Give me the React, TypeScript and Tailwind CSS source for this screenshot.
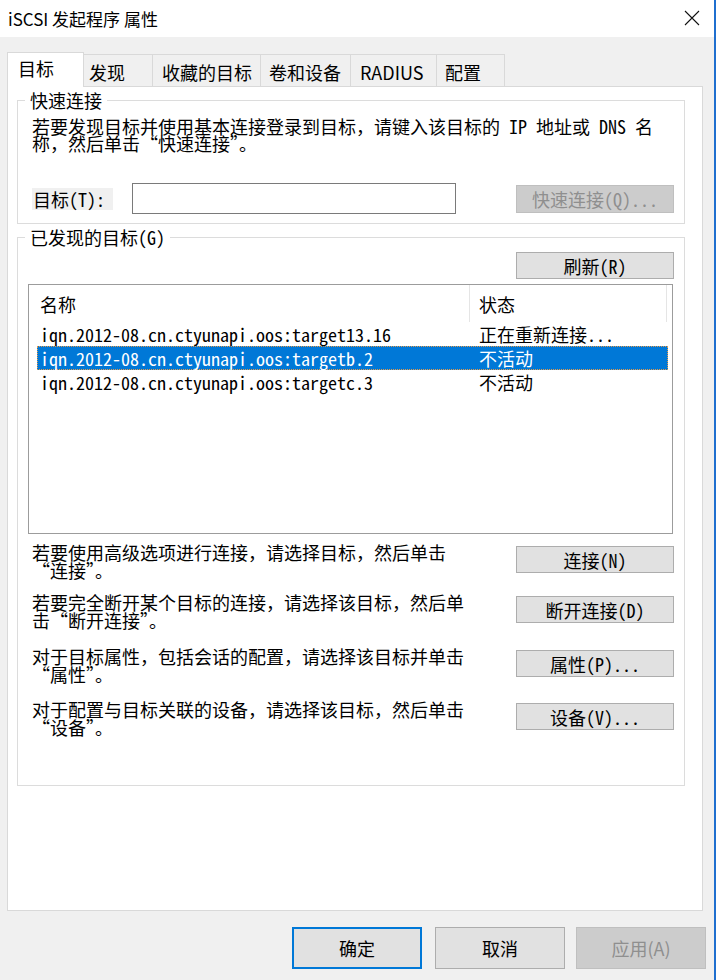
import { ReactNode } from "react";

const mono = "font-['Noto_Sans_Mono_CJK_SC','Liberation_Mono','Noto_Sans_CJK_SC',monospace]";
const ui = "font-['Noto_Sans_CJK_SC','Noto_Sans',sans-serif]";

export default function App() {
  return (
    <div className="flex h-[980px] w-[720px] bg-white text-black">
      <div className="flex w-[714px] flex-col bg-[#f0f0f0]">
        <TitleBar />
        <div className="pl-[7px] pt-[15px]">
          <TabStrip />
          <div className="h-[825px] w-[696px] border border-[#d9d9d9] bg-white pl-[9px] pt-[4px]">
            <QuickConnect />
            <Discovered />
          </div>
        </div>
        <Footer />
      </div>
      <div className="w-[2px] bg-[#1f6fcf]" />
    </div>
  );
}

function TitleBar() {
  return (
    <div className="flex h-[37px] items-center justify-between bg-white pl-[8px] pr-[14px]">
      <span className={`${ui} text-[17px] leading-[20px]`}>iSCSI 发起程序 属性</span>
      <svg width="16" height="16" viewBox="0 0 16 16" className="mb-[2px]">
        <path d="M1 1 L15 15 M15 1 L1 15" stroke="#111" strokeWidth="1.1" fill="none" />
      </svg>
    </div>
  );
}

const tabs = [
  { name: "发现", cls: "w-[69px] pl-[5px]" },
  { name: "收藏的目标", cls: "w-[108px] pl-[9px]" },
  { name: "卷和设备", cls: "w-[90px] pl-[8px]" },
  { name: "RADIUS", cls: "w-[86px] pl-[9px]" },
  { name: "配置", cls: "w-[68px] pl-[8px]" },
];

function TabStrip() {
  return (
    <div className={`${ui} flex h-[34px] items-end text-[18px] leading-[20px]`}>
      <div className="relative z-10 -mb-px h-[35px] w-[77px] border-l border-r border-t border-[#d9d9d9] bg-white pl-[10px] pt-[5px]">
        目标
      </div>
      {tabs.map((t) => (
        <div
          key={t.name}
          className={`h-[32px] border-r border-t border-[#d9d9d9] bg-[#f0f0f0] pt-[7px] ${t.cls}`}
        >
          {t.name}
        </div>
      ))}
    </div>
  );
}

function Btn({ children, disabled, className = "" }: { children: ReactNode; disabled?: boolean; className?: string }) {
  return (
    <div
      className={`${mono} flex w-[158px] items-center justify-center border text-[18px] leading-[20px] ${
        disabled ? "border-[#bfbfbf] bg-[#cccccc] text-[#8f8f8f]" : "border-[#adadad] bg-[#e1e1e1]"
      } ${className}`}
    >
      {children}
    </div>
  );
}

function QuickConnect() {
  return (
    <fieldset className={`${mono} w-[668px] border border-[#dcdcdc] pb-[9px] pl-[14px] pr-[10px] text-[18px]`}>
      <legend className="-ml-[7px] px-[5px] leading-[18px]">快速连接</legend>
      <p className="mt-[9px] whitespace-nowrap leading-[17px]">
        若要发现目标并使用基本连接登录到目标，请键入该目标的 IP 地址或 DNS 名
        <br />
        称，然后单击“快速连接”。
      </p>
      <div className="mt-[31px] flex h-[31px] items-center">
        <span className="flex h-[22px] w-[81px] items-center bg-[#f0f0f0] pl-px leading-[18px]">目标(T):</span>
        <div className="ml-[19px] h-[31px] w-[324px] border border-[#7a7a7a] bg-white" />
        <Btn disabled className="ml-auto h-[28px]">
          快速连接(Q)...
        </Btn>
      </div>
    </fieldset>
  );
}

const rows = [
  { name: "iqn.2012-08.cn.ctyunapi.oos:target13.16", status: "正在重新连接..." },
  { name: "iqn.2012-08.cn.ctyunapi.oos:targetb.2", status: "不活动", selected: true },
  { name: "iqn.2012-08.cn.ctyunapi.oos:targetc.3", status: "不活动" },
];

const actions = [
  { l1: "若要使用高级选项进行连接，请选择目标，然后单击", l2: "“连接”。", btn: "连接(N)", cls: "mt-[9px]" },
  { l1: "若要完全断开某个目标的连接，请选择该目标，然后单", l2: "击“断开连接”。", btn: "断开连接(D)", cls: "mt-[14px]" },
  { l1: "对于目标属性，包括会话的配置，请选择该目标并单击", l2: "“属性”。", btn: "属性(P)...", cls: "mt-[18px]" },
  { l1: "对于配置与目标关联的设备，请选择该目标，然后单击", l2: "“设备”。", btn: "设备(V)...", cls: "mt-[17px]" },
];

function Discovered() {
  return (
    <fieldset className={`${mono} mt-[4px] w-[668px] border border-[#dcdcdc] pb-[49px] pl-[10px] pr-[10px] text-[18px]`}>
      <legend className="-ml-[3px] px-[5px] leading-[18px]">已发现的目标(G)</legend>
      <div className="mt-[6px] flex justify-end">
        <Btn className="h-[27px]">刷新(R)</Btn>
      </div>
      <div className="mt-[5px] h-[250px] w-[645px] border border-[#9c9c9c] bg-white">
        <div className="flex h-[37px] items-center leading-[20px]">
          <div className="flex h-full w-[441px] items-center border-r border-[#e5e5e5] pl-[11px]">名称</div>
          <div className="flex h-full w-[197px] items-center border-r border-[#e5e5e5] pl-[9px]">状态</div>
        </div>
        {rows.map((r) => (
          <div
            key={r.name}
            className={`ml-[8px] flex h-[24px] w-[631px] items-center border leading-[20px] ${
              r.selected ? "border-dotted border-[#e59a4a] bg-[#0078d7] text-white" : "border-transparent"
            }`}
          >
            <span className="w-[439px] whitespace-nowrap pl-[2px]">{r.name}</span>
            <span className="whitespace-nowrap pl-[2px]">{r.status}</span>
          </div>
        ))}
      </div>
      {actions.map((a) => (
        <div key={a.btn} className={`flex items-start justify-between pl-[4px] ${a.cls}`}>
          <p className="whitespace-nowrap leading-[18px]">
            {a.l1}
            <br />
            {a.l2}
          </p>
          <Btn className="mt-[3px] h-[27px]">{a.btn}</Btn>
        </div>
      ))}
    </fieldset>
  );
}

function Footer() {
  return (
    <div className={`${ui} mt-[16px] flex justify-end pr-[8px] text-[18px] leading-[22px]`}>
      <div className="flex h-[42px] w-[130px] items-center justify-center border-2 border-[#0078d7] bg-[#e1e1e1]">确定</div>
      <div className="ml-[13px] flex h-[42px] w-[130px] items-center justify-center border border-[#adadad] bg-[#e1e1e1]">取消</div>
      <div className="ml-[11px] flex h-[42px] w-[130px] items-center justify-center border border-[#bfbfbf] bg-[#cccccc] text-[#8f8f8f]">
        应用(A)
      </div>
    </div>
  );
}
